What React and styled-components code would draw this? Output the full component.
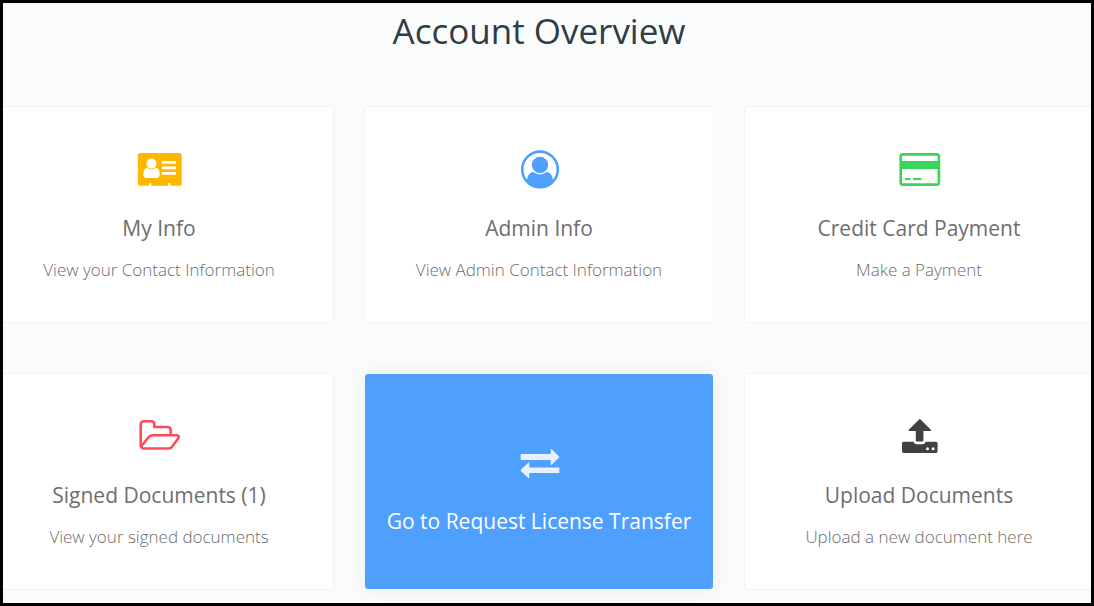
import React from "react";
import styled, { createGlobalStyle, css } from "styled-components";

const GlobalStyle = createGlobalStyle`
  * { box-sizing: border-box; }
  body {
    margin: 0;
    background: #fafcfc;
    font-family: "Open Sans", "Noto Sans", sans-serif;
  }
`;

const Page = styled.main`
  min-height: 100vh;
  overflow: hidden;
  border: 3px solid #000;
  background: #fafcfc;
  padding-bottom: 13px;
`;

const Overview = styled.section`
  margin: 0 -3px 0 -19px;
`;

const Heading = styled.h1`
  margin: 0;
  padding: 4px 0 51px;
  font-size: 35px;
  line-height: 48px;
  font-weight: 400;
  text-align: center;
  color: #2f3d46;
`;

const CardGrid = styled.div`
  display: grid;
  grid-template-columns: repeat(3, minmax(0, 1fr));
  gap: 50px 30px;
`;

const Card = styled.a`
  display: flex;
  flex-direction: column;
  align-items: center;
  padding: 38px 12px 40px;
  border: 1px solid #f1f3f3;
  border-radius: 4px;
  background: #fff;
  background-clip: padding-box;
  color: #6e6e6e;
  text-align: center;
  text-decoration: none;

  ${({ $active }) =>
    $active &&
    css`
      padding-top: 64px;
      border-color: transparent;
      background-color: #4f9fff;
      color: #fff;
      box-shadow: 0 0 20px rgba(0, 0, 0, 0.06);
    `}
`;

const Icon = styled.svg`
  width: 48px;
  height: 48px;
  color: ${({ $color }) => $color};
`;

const CardTitle = styled.h2`
  margin: 20px 0 0;
  font-size: 21px;
  line-height: 30px;
  font-weight: 400;
`;

const CardText = styled.p`
  margin: 15px 0 0;
  font-size: 17px;
  line-height: 24px;
  font-weight: 300;
  color: #6c6c6c;
`;

const ContactCardArt = () => (
  <>
    <path
      fill="currentColor"
      d="M5 8H44.5A2.2 2.2 0 0 1 46.7 10.2V38.5A2.2 2.2 0 0 1 44.5 40.7H35.3V38H33V40.7H16.3V38H14V40.7H5A2.2 2.2 0 0 1 2.8 38.5V10.2A2.2 2.2 0 0 1 5 8Z"
    />
    <path
      fill="#fff"
      d="M12.3 22.8C9.5 23 8.3 26 8.3 29.8C8.3 31.8 9.6 33 11.3 33H21.7C23.4 33 24.7 31.8 24.7 29.8C24.7 26 23.5 23 20.7 22.8C18 25 15 25 12.3 22.8Z"
    />
    <circle cx="16.4" cy="18.6" r="5" fill="#fff" />
    <path fill="#fff" d="M27 16h14v2.7H27zM27 21.6h14v2.7H27zM27 27.1h14v2.7H27z" />
  </>
);

const UserArt = () => (
  <>
    <circle cx="25" cy="24.4" r="17.8" fill="none" stroke="currentColor" strokeWidth="2.6" />
    <circle cx="25" cy="20" r="8.2" fill="currentColor" />
    <path
      fill="currentColor"
      d="M18.4 27.1C14.5 27.4 12.5 30.5 12 35.6L14 39.5Q25 45 36 39.5L38 35.6C37.5 30.5 35.5 27.4 31.6 27.1C27.7 30.2 22.3 30.2 18.4 27.1Z"
    />
  </>
);

const CreditCardArt = () => (
  <>
    <rect x="5.7" y="9.4" width="38.2" height="30.2" rx="2.2" fill="none" stroke="currentColor" strokeWidth="2.6" />
    <path fill="currentColor" d="M5 16h40v8H5zM10 33h5.3v2H10zM18 33h8.3v2H18z" />
  </>
);

const FolderArt = () => (
  <g fill="none" stroke="currentColor" strokeWidth="2.6" strokeLinejoin="round">
    <path d="M35.7 22.6V18A3 3 0 0 0 32.7 15H19.3V12.2A3 3 0 0 0 16.3 9.3H8.7A3 3 0 0 0 5.7 12.3V33.4A3 3 0 0 0 8.7 36.5H33Q35.5 36.5 36.9 34.8L42.9 27Q45 23.2 41.7 23.2H17.8Q15.2 23.2 13.6 25.2L6.2 34.5" />
  </g>
);

const TransferArt = () => (
  <path
    fill="currentColor"
    d="M5.7 16.1H35.7V12Q35.7 10.2 37 11.5L44.1 18.6Q44.6 19.1 44.1 19.6L37 26.6Q35.7 27.8 35.7 26V22H5.7ZM44.3 29.6H14.3V25.4Q14.3 23.6 13 24.9L5.9 31.8Q5.4 32.4 5.9 32.9L13 39.8Q14.3 41.1 14.3 39.3V35.1H44.3Z"
  />
);

const UploadArt = () => (
  <>
    <path
      fill="currentColor"
      d="M24.1 7.4Q24.8 6.8 25.5 7.4L35.6 17.4Q36.8 18.8 34.8 19H28.4V28.2Q28.4 29.4 27.2 29.4H22Q20.8 29.4 20.8 28.2V19H14.8Q12.8 18.8 14 17.4Z"
    />
    <path
      fill="currentColor"
      fillRule="evenodd"
      d="M8.3 29.7H18.4Q19.4 32.3 22 32.3H27.2Q29.8 32.3 30.8 29.7H40.9Q42.6 29.7 42.6 31.4V39.3Q42.6 41 40.9 41H8.7Q7 41 7 39.3V31.4Q7 29.7 8.3 29.7ZM31 36.7a1.5 1.5 0 1 0 3 0a1.5 1.5 0 1 0 -3 0ZM36.6 36.7a1.5 1.5 0 1 0 3 0a1.5 1.5 0 1 0 -3 0Z"
    />
  </>
);

const cards = [
  { title: "My Info", text: "View your Contact Information", color: "#ffb800", Art: ContactCardArt },
  { title: "Admin Info", text: "View Admin Contact Information", color: "#4f9fff", Art: UserArt },
  { title: "Credit Card Payment", text: "Make a Payment", color: "#37d657", Art: CreditCardArt },
  { title: "Signed Documents (1)", text: "View your signed documents", color: "#ff4a57", Art: FolderArt },
  { title: "Go to Request License Transfer", color: "#e8f2ff", Art: TransferArt, active: true },
  { title: "Upload Documents", text: "Upload a new document here", color: "#414042", Art: UploadArt },
];

export default function App() {
  return (
    <>
      <GlobalStyle />
      <Page>
        <Overview>
          <Heading>Account Overview</Heading>
          <CardGrid>
            {cards.map(({ title, text, color, Art, active }) => (
              <Card key={title} href="#" $active={active}>
                <Icon viewBox="0 0 48 48" $color={color} aria-hidden="true">
                  <Art />
                </Icon>
                <CardTitle>{title}</CardTitle>
                {text && <CardText>{text}</CardText>}
              </Card>
            ))}
          </CardGrid>
        </Overview>
      </Page>
    </>
  );
}
